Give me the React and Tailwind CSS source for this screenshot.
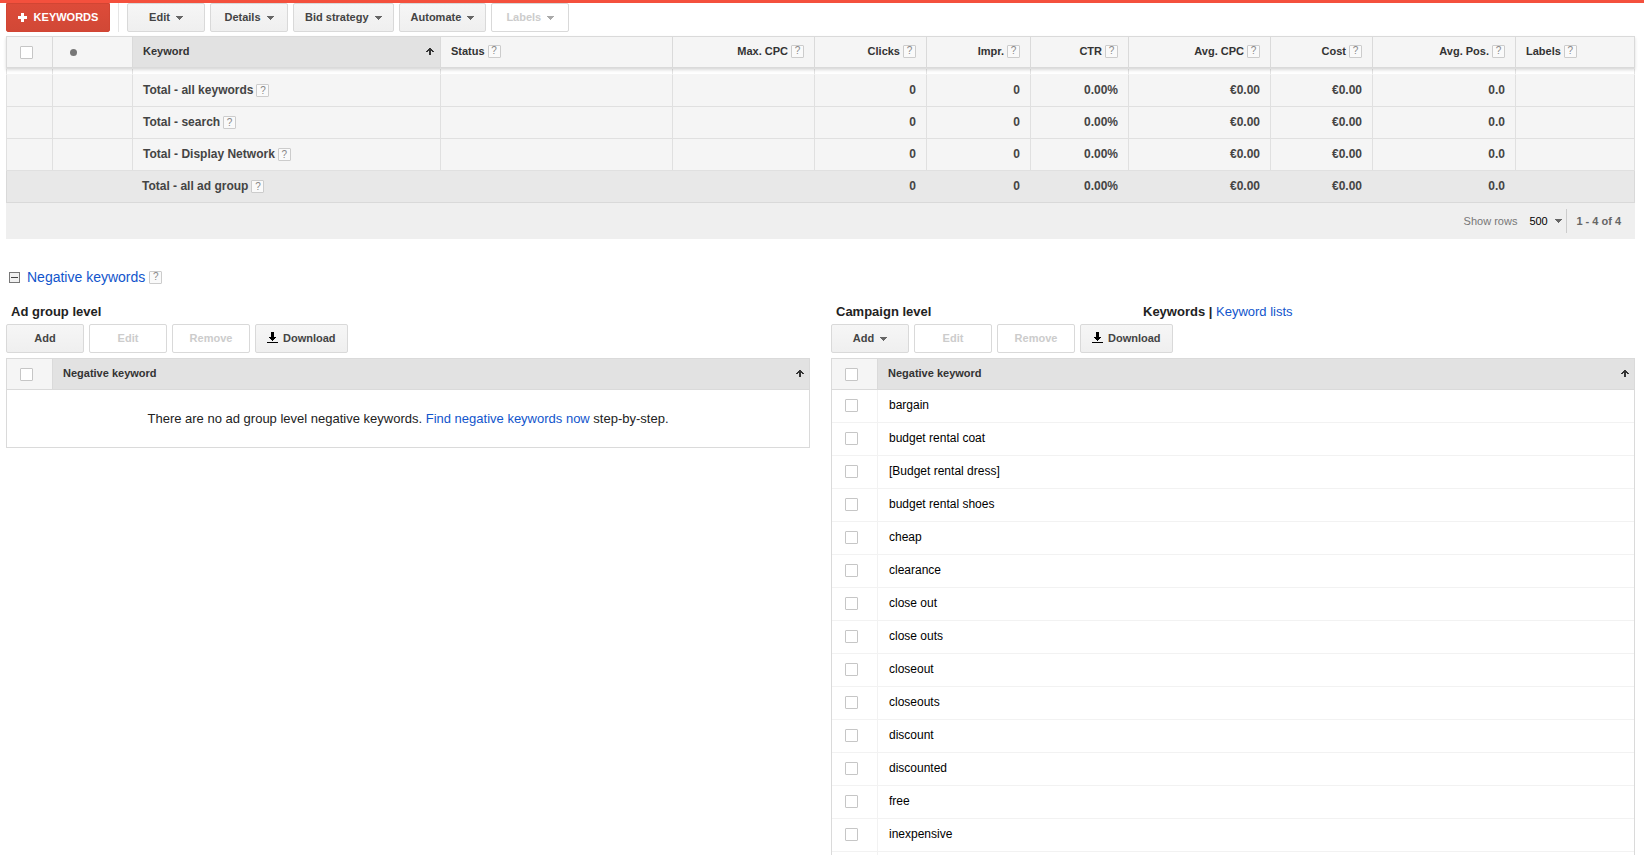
import React, { useState } from 'react';

const columns = [
  { label: 'Status', align: 'left' },
  { label: 'Max. CPC', align: 'right' },
  { label: 'Clicks', align: 'right' },
  { label: 'Impr.', align: 'right' },
  { label: 'CTR', align: 'right' },
  { label: 'Avg. CPC', align: 'right' },
  { label: 'Cost', align: 'right' },
  { label: 'Avg. Pos.', align: 'right' },
  { label: 'Labels', align: 'left' },
];

const totals = [
  { name: 'Total - all keywords', values: ['', '', '0', '0', '0.00%', '€0.00', '€0.00', '0.0', ''] },
  { name: 'Total - search', values: ['', '', '0', '0', '0.00%', '€0.00', '€0.00', '0.0', ''] },
  { name: 'Total - Display Network', values: ['', '', '0', '0', '0.00%', '€0.00', '€0.00', '0.0', ''] },
];

const groupTotal = { name: 'Total - all ad group', values: ['', '', '0', '0', '0.00%', '€0.00', '€0.00', '0.0', ''] };

const negativeKeywords = [
  'bargain',
  'budget rental coat',
  '[Budget rental dress]',
  'budget rental shoes',
  'cheap',
  'clearance',
  'close out',
  'close outs',
  'closeout',
  'closeouts',
  'discount',
  'discounted',
  'free',
  'inexpensive',
];

const Caret = ({ className = 'text-[#666]' }) => (
  <svg width="7" height="4" viewBox="0 0 7 4" shapeRendering="crispEdges" className={className} aria-hidden="true">
    <path d="M0 0h7v1H6v1H5v1H4v1H3V3H2V2H1V1H0z" fill="currentColor" />
  </svg>
);

const SortArrow = () => (
  <svg width="8" height="7" viewBox="0 0 8 7" shapeRendering="crispEdges" aria-hidden="true">
    <path d="M3 0h2v1h1v1h1v1h1v1H6V3H5v4H3V3H2v1H0V3h1V2h1V1h1z" fill="#333" />
  </svg>
);

const DownloadIcon = () => (
  <svg width="11" height="11" viewBox="0 0 11 11" shapeRendering="crispEdges" aria-hidden="true">
    <path d="M4 0h3v5h2v1H8v1H7v1H6v1H5V8H4V7H3V6H2V5h2zM0 10h11v1H0z" fill="#000" />
  </svg>
);

const Help = () => (
  <button
    type="button"
    aria-label="Help"
    className="flex size-[13px] shrink-0 items-center justify-center rounded-[1px] border border-[#ccc] bg-[#fafafa] text-[10px] leading-none font-normal text-[#888]"
  >
    ?
  </button>
);

const Checkbox = ({ id, label }) => (
  <input
    type="checkbox"
    id={id}
    aria-label={label}
    className="block size-[13px] appearance-none rounded-[1px] border border-[#c6c6c6] bg-white checked:bg-[#666]"
  />
);

const ToolButton = ({ children, disabled, caret }) => (
  <button
    type="button"
    disabled={disabled}
    className={`flex h-[29px] min-w-[78px] items-center justify-center rounded-[2px] border border-[#d9d9d9] px-[11px] text-[11px] font-bold ${
      disabled ? 'bg-white text-[#ccc]' : 'bg-linear-to-b from-[#f6f6f6] to-[#efefef] text-[#444]'
    }`}
  >
    {children}
    {caret && (
      <span className="ml-[6px]">
        <Caret className={disabled ? 'text-[#aaa]' : 'text-[#666]'} />
      </span>
    )}
  </button>
);

const NegativeToolbar = ({ addCaret }) => (
  <div className="flex gap-[5px]">
    <ToolButton caret={addCaret}>Add</ToolButton>
    <ToolButton disabled>Edit</ToolButton>
    <ToolButton disabled>Remove</ToolButton>
    <ToolButton>
      <span className="mr-[5px] pb-[2px]">
        <DownloadIcon />
      </span>
      Download
    </ToolButton>
  </div>
);

const NegativeTable = ({ id, children }) => (
  <table className="mt-[5px] w-full table-fixed border-separate border-spacing-0 border-x border-t border-[#dadada]">
    <colgroup>
      <col className="w-[46px]" />
      <col />
    </colgroup>
    <thead>
      <tr className="h-[31px]">
        <th className="border-r border-b border-[#dadada] bg-[#f5f5f5] pl-[13px]">
          <Checkbox id={`${id}-all`} label="Select all" />
        </th>
        <th className="border-b border-[#dadada] bg-[#e2e2e2] pr-[5px] pb-[2px] pl-[10px] text-left text-[11px] text-[#333]">
          <div className="flex items-center justify-between">
            Negative keyword
            <SortArrow />
          </div>
        </th>
      </tr>
    </thead>
    <tbody>{children}</tbody>
  </table>
);

const KeywordsTable = () => (
  <table className="mt-1 w-full table-fixed border-separate border-spacing-0 text-[#444]">
    <colgroup>
      <col className="w-[47px]" />
      <col className="w-[80px]" />
      <col />
      <col className="w-[232px]" />
      <col className="w-[142px]" />
      <col className="w-[112px]" />
      <col className="w-[104px]" />
      <col className="w-[98px]" />
      <col className="w-[142px]" />
      <col className="w-[102px]" />
      <col className="w-[143px]" />
      <col className="w-[119px]" />
    </colgroup>
    <thead className="relative shadow-[0_1px_0_#dedede,0_2px_3px_rgba(0,0,0,0.15)]">
      <tr className="h-[32px] text-[11px] text-[#333]">
        <th className="border border-[#dadada] bg-[#f5f5f5] pl-[13px]">
          <Checkbox id="keywords-all" label="Select all keywords" />
        </th>
        <th className="border-y border-r border-[#dadada] bg-[#f5f5f5] pl-[17px]">
          <div className="size-[7px] rounded-full bg-[#777]" />
        </th>
        <th className="border-y border-r border-[#dadada] bg-[#e2e2e2] pr-[6px] pb-[2px] pl-[10px]">
          <div className="flex items-center justify-between">
            Keyword
            <SortArrow />
          </div>
        </th>
        {columns.map((col) => (
          <th key={col.label} className="border-y border-r border-[#dadada] bg-[#f5f5f5] px-[10px] pb-[2px]">
            <div className={`flex items-center gap-[3px] ${col.align === 'right' ? 'justify-end' : ''}`}>
              {col.label}
              <Help />
            </div>
          </th>
        ))}
      </tr>
    </thead>
    <tbody className="text-[12px] font-bold">
      <tr className="h-[7px]" aria-hidden="true">
        <td className="border-x border-b border-[#e3e3e3] border-b-[#f5f5f5]" />
        <td className="border-r border-b border-[#e3e3e3] border-b-[#f5f5f5]" />
        <td className="border-r border-b border-[#e3e3e3] border-b-[#f5f5f5]" />
        {columns.map((col) => (
          <td key={col.label} className="border-r border-b border-[#e3e3e3] border-b-[#f5f5f5]" />
        ))}
      </tr>
      {totals.map((row) => (
        <tr key={row.name} className="h-8 bg-[#f5f5f5]">
          <td className="border-x border-b border-[#e0e0e0]" />
          <td className="border-r border-b border-[#e0e0e0]" />
          <td className="border-r border-b border-[#e0e0e0] pl-[10px]">
            <div className="flex items-center gap-[3px]">
              <span className="pb-[2px]">{row.name}</span>
              <Help />
            </div>
          </td>
          {row.values.map((value, i) => (
            <td key={i} className="border-r border-b border-[#e0e0e0] px-[10px] pb-[2px] text-right">
              {value}
            </td>
          ))}
        </tr>
      ))}
      <tr className="h-8 bg-[#e8e8e8]">
        <td className="border-b border-l border-[#d9d9d9]" />
        <td className="border-b border-[#d9d9d9]" />
        <td className="border-b border-[#d9d9d9] pl-[9px]">
          <div className="flex items-center gap-[3px]">
            <span className="pb-[2px]">{groupTotal.name}</span>
            <Help />
          </div>
        </td>
        {groupTotal.values.map((value, i) => (
          <td key={i} className="border-b border-[#d9d9d9] px-[11px] pb-[2px] text-right last:border-r">
            {value}
          </td>
        ))}
      </tr>
    </tbody>
  </table>
);

const App = () => {
  const [open, setOpen] = useState(true);
  const [rows, setRows] = useState('500');

  return (
    <div className="bg-white font-['Liberation_Sans',Arial,sans-serif] text-[13px] text-[#222]">
      <div className="h-[3px] bg-[#f4503d]" />
      <main className="pr-[9px] pl-[6px]">
        <div className="flex gap-[5px]">
          <button
            type="button"
            className="flex h-[29px] w-[104px] items-center justify-center gap-[7px] rounded-b-[2px] border border-[#d24533] bg-linear-to-b from-[#dd4b39] to-[#d14836] text-[11px] font-bold text-white"
          >
            <svg width="9" height="9" viewBox="0 0 9 9" shapeRendering="crispEdges" aria-hidden="true">
              <path d="M3 0h3v3h3v3H6v3H3V6H0V3h3z" fill="#fff" />
            </svg>
            KEYWORDS
          </button>
          <div className="mx-[3px] w-px bg-[#e5e5e5]" />
          <ToolButton caret>Edit</ToolButton>
          <ToolButton caret>Details</ToolButton>
          <ToolButton caret>Bid strategy</ToolButton>
          <ToolButton caret>Automate</ToolButton>
          <ToolButton caret disabled>Labels</ToolButton>
        </div>

        <KeywordsTable />

        <div className="flex h-9 items-center justify-end bg-[#efefef] pr-[14px] text-[11px] text-[#666]">
          <label htmlFor="show-rows" className="mr-3 text-[#777]">Show rows</label>
          <div className="relative mr-1 flex items-center">
            <select
              id="show-rows"
              value={rows}
              onChange={(e) => setRows(e.target.value)}
              className="w-[33px] appearance-none bg-transparent text-black"
            >
              <option>50</option>
              <option>100</option>
              <option>500</option>
            </select>
            <span className="pointer-events-none absolute right-0">
              <Caret />
            </span>
          </div>
          <span className="mr-[9px] h-6 w-px bg-[#ccc]" />
          <span className="font-bold">1 - 4 of 4</span>
        </div>

        <div className="mt-7 flex h-5 items-center pl-[3px]">
          <button
            type="button"
            aria-label="Toggle negative keywords"
            aria-expanded={open}
            onClick={() => setOpen(!open)}
            className="mr-[7px] flex size-[11px] items-center justify-center border border-[#777] bg-[#f1f1f1]"
          >
            <span className="h-px w-[7px] bg-[#444]" />
          </button>
          <a href="#negative" className="mr-1 text-[14px] text-[#15c]">Negative keywords</a>
          <Help />
        </div>

        {open && (
          <div id="negative" className="mt-[15px] grid grid-cols-2 items-start gap-[21px]">
            <section>
              <h2 className="mb-[2px] pl-[5px] leading-5 font-bold">Ad group level</h2>
              <NegativeToolbar />
              <NegativeTable id="adgroup">
                <tr className="h-[58px]">
                  <td colSpan={2} className="border-b border-[#dadada] text-center">
                    There are no ad group level negative keywords.{' '}
                    <a href="#find" className="text-[#15c]">Find negative keywords now</a> step-by-step.
                  </td>
                </tr>
              </NegativeTable>
            </section>

            <section>
              <div className="mb-[2px] flex pl-[5px] leading-5 font-bold">
                <h2 className="w-[307px]">Campaign level</h2>
                <span className="whitespace-pre">Keywords | </span>
                <a href="#lists" className="font-normal text-[#15c]">Keyword lists</a>
              </div>
              <NegativeToolbar addCaret />
              <NegativeTable id="campaign">
                {negativeKeywords.map((keyword, i) => (
                  <tr key={keyword} className="h-[33px] text-[12px] text-black">
                    <td className="border-r border-b border-[#f2f2f2] pb-[2px] pl-[13px]">
                      <Checkbox id={`negative-${i}`} />
                    </td>
                    <td className="border-b border-[#f2f2f2] pb-[2px] pl-[11px]">
                      <label htmlFor={`negative-${i}`}>{keyword}</label>
                    </td>
                  </tr>
                ))}
                <tr className="h-[3px]" aria-hidden="true">
                  <td className="border-r border-[#f2f2f2]" />
                  <td />
                </tr>
              </NegativeTable>
            </section>
          </div>
        )}
      </main>
    </div>
  );
};

export default App;
